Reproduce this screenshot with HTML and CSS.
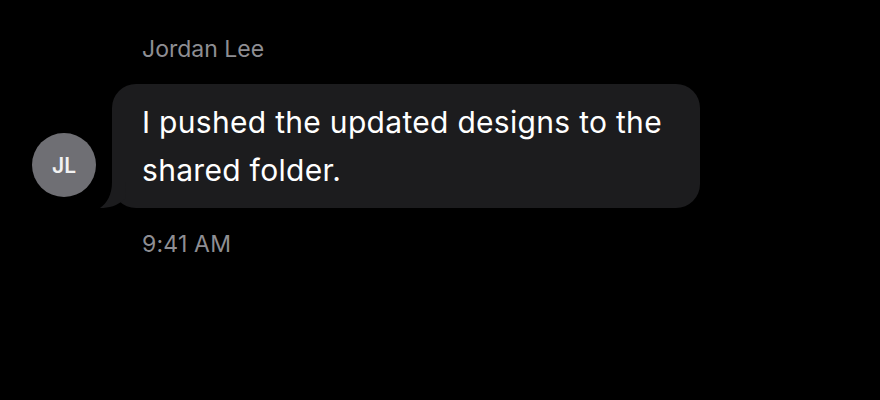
FILE: index.html
```html
<!DOCTYPE html>
<html>
<head>
	<meta charset="utf-8">
	<title>Message</title>
	<link rel="stylesheet" href="styles.css">
</head>
<body>

<div class="thread">
	<div class="message">
		<div class="sender">Jordan Lee</div>
		<div class="avatar">JL</div>
		<div class="bubble">
			I pushed the updated designs to the shared folder.
			<svg class="tail" width="26" height="26" viewBox="0 0 26 26">
				<path d="M12 0 C12 13 7 21 0 26 C9 26 17 24 25 17 L26 0 Z" fill="#1c1c1e"/>
			</svg>
		</div>
		<div class="time">9:41 AM</div>
	</div>
</div>

</body>
</html>
```

FILE: styles.css
```css
body {
	margin: 0;
	background: #000000;
	font-family: Inter, "Liberation Sans", sans-serif;
	color: #ffffff;
}
.thread {
	padding: 35px 0 0 32px;
}
.message {
	display: grid;
	grid-template-columns: 64px auto;
	column-gap: 16px;
	justify-content: start;
}
.sender {
	grid-column: 2;
	padding-left: 30px;
	font-size: 23px;
	line-height: 28px;
	color: #8e8e93;
	margin-bottom: 21px;
}
.avatar {
	grid-column: 1;
	grid-row: 2;
	align-self: end;
	margin-bottom: 11px;
	width: 64px;
	height: 64px;
	border-radius: 50%;
	background: #6f6f74;
	color: #f2f2f2;
	font-size: 21px;
	font-weight: 600;
	display: flex;
	align-items: center;
	justify-content: center;
}
.bubble {
	grid-column: 2;
	grid-row: 2;
	position: relative;
	width: 528px;
	padding: 14px 30px;
	background: #1c1c1e;
	border-radius: 24px;
	font-size: 30px;
	line-height: 48px;
	letter-spacing: 0.3px;
}
.tail {
	position: absolute;
	left: -12px;
	bottom: 0;
}
.time {
	grid-column: 2;
	padding-left: 30px;
	margin-top: 22px;
	font-size: 23px;
	line-height: 28px;
	letter-spacing: 0.2px;
	color: #8e8e93;
}
```
